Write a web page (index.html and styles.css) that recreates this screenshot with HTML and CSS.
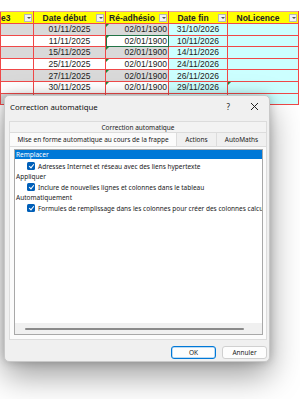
FILE: index.html
```html
<!DOCTYPE html>
<html lang="fr">
<head>
  <meta charset="UTF-8" />
  <meta name="viewport" content="width=device-width, initial-scale=1.0"/>
  <title>Correction automatique</title>
  <link rel="stylesheet" href="styles.css">
</head>
<body>
  <div class="sheet">
    <table class="grid">
      <colgroup>
        <col class="c1"><col class="c2"><col class="c3"><col class="c4"><col class="c5">
      </colgroup>
      <tr class="head">
        <th><div class="hcell"><span class="htext left">e3</span><span class="drop"></span></div></th>
        <th><div class="hcell"><span class="htext">Date début</span><span class="drop"></span></div></th>
        <th><div class="hcell"><span class="htext">Ré-adhésio</span><span class="drop"></span></div></th>
        <th><div class="hcell"><span class="htext">Date fin</span><span class="drop"></span></div></th>
        <th><div class="hcell"><span class="htext">NoLicence</span><span class="drop"></span></div></th>
      </tr>
      <tr class="odd">
        <td></td><td>01/11/2025</td><td class="num flag">02/01/1900</td><td class="cyan">31/10/2026</td><td class="cyan"></td>
      </tr>
      <tr>
        <td></td><td>11/11/2025</td><td class="num flag selected">02/01/1900</td><td class="cyan">10/11/2026</td><td class="cyan"></td>
      </tr>
      <tr class="odd">
        <td></td><td>15/11/2025</td><td class="num flag">02/01/1900</td><td class="cyan">14/11/2026</td><td class="cyan"></td>
      </tr>
      <tr>
        <td></td><td>25/11/2025</td><td class="num flag">02/01/1900</td><td class="cyan">24/11/2026</td><td class="cyan"></td>
      </tr>
      <tr class="odd">
        <td></td><td>27/11/2025</td><td class="num flag">02/01/1900</td><td class="cyan">26/11/2026</td><td class="cyan"></td>
      </tr>
      <tr>
        <td></td><td>30/11/2025</td><td class="num flag">02/01/1900</td><td class="cyan">29/11/2026</td><td class="cyan flag"></td>
      </tr>
      <tr class="odd">
        <td></td><td></td><td class="num"></td><td class="cyan"></td><td class="cyan"></td>
      </tr>
    </table>
  </div>

  <!-- boîte de dialogue par-dessus la feuille -->
  <div class="dialog">
    <div class="titlebar">
      <span class="title">Correction automatique</span>
      <span class="help">?</span>
      <svg class="close" width="9" height="9" viewBox="0 0 9 9">
        <path d="M1 1 L8 8 M8 1 L1 8" stroke="#222" stroke-width="1" fill="none"/>
      </svg>
    </div>

    <div class="tabs">
      <div class="tabrow top">
        <div class="tab wide">Correction automatique</div>
      </div>
      <div class="tabrow">
        <div class="tab active">Mise en forme automatique au cours de la frappe</div>
        <div class="tab">Actions</div>
        <div class="tab">AutoMaths</div>
      </div>
      <div class="panel">
        <div class="list">
          <div class="items">
            <div class="group sel">Remplacer</div>
            <div class="item"><span class="check"></span>Adresses Internet et réseau avec des liens hypertexte</div>
            <div class="group">Appliquer</div>
            <div class="item"><span class="check"></span>Inclure de nouvelles lignes et colonnes dans le tableau</div>
            <div class="group">Automatiquement</div>
            <div class="item"><span class="check"></span>Formules de remplissage dans les colonnes pour créer des colonnes calculé</div>
          </div>
          <div class="hscroll"><span class="thumb"></span></div>
        </div>
      </div>
    </div>

    <div class="buttons">
      <button class="btn default">OK</button>
      <button class="btn">Annuler</button>
    </div>
  </div>
</body>
</html>
```

FILE: styles.css
```css
body {
  margin: 0;
  width: 300px;
  height: 399px;
  overflow: hidden;
  background: #fff;
  font-family: "Liberation Sans", Arial, sans-serif;
  position: relative;
}

.sheet {
  padding-top: 11px;
}

.grid {
  border-collapse: collapse;
  table-layout: fixed;
  width: 298px;
  font-size: 8.5px;
  color: #222;
}

.c1 { width: 33px; }
.c2 { width: 72px; }
.c3 { width: 63px; }
.c4 { width: 59px; }
.c5 { width: 71px; }

.grid th,
.grid td {
  border: 1px solid #f04848;
  padding: 0;
  height: 10.6px;
  line-height: 10px;
  text-align: center;
  white-space: nowrap;
  overflow: hidden;
}

.grid th {
  background: #ffff00;
  height: 11px;
  font-weight: bold;
  border-top-color: #e0a0a0;
}

.hcell {
  display: flex;
  align-items: center;
}

.htext {
  flex: 1;
  overflow: hidden;
  text-align: center;
}

.htext.left {
  text-align: left;
}

.drop {
  width: 8px;
  height: 8px;
  margin: 0 1px;
  flex: none;
  background: #f2f2f2;
  border: 1px solid #b8b8b8;
  box-sizing: border-box;
  position: relative;
}

.drop::after {
  content: "";
  position: absolute;
  left: 1.5px;
  top: 2.5px;
  border-left: 2px solid transparent;
  border-right: 2px solid transparent;
  border-top: 2px solid #555;
}

.grid tr.odd td {
  background: #d9d9d9;
}

.grid td.num {
  text-align: right;
  padding-right: 1px;
  position: relative;
}

.grid td.cyan,
.grid tr.odd td.cyan {
  background: #ccffff;
}

.flag {
  position: relative;
}

.flag::before {
  content: "";
  position: absolute;
  left: 0;
  top: 0;
  border-top: 3px solid #1a8a3a;
  border-right: 3px solid transparent;
}

.grid td.selected {
  background: #fff;
  outline: 1.5px solid #217346;
  outline-offset: -1px;
}

/* dialog */

.dialog {
  position: absolute;
  left: 4px;
  top: 95px;
  width: 266px;
  height: 267px;
  box-sizing: border-box;
  background: #f0f0f0;
  border: 1px solid #c8c8c8;
  border-radius: 5px;
  box-shadow: 0 14px 32px rgba(0, 0, 0, 0.38), 0 0 10px rgba(0, 0, 0, 0.22);
  font-family: "Noto Sans", "Open Sans", sans-serif;
  font-size: 6.5px;
  color: #1a1a1a;
  display: flex;
  flex-direction: column;
  padding: 0 2px 0 4px;
}

.titlebar {
  height: 19px;
  display: flex;
  align-items: center;
  padding-left: 1px;
  padding-top: 1px;
}

.title {
  flex: 1;
  font-size: 7.8px;
  color: #111;
}

.help {
  font-size: 8px;
  margin-right: 20px;
  color: #222;
}

.close {
  margin-right: 8px;
}

.tabs {
  margin-top: 5px;
  display: flex;
  flex-direction: column;
}

.tabrow {
  display: flex;
  height: 14px;
}

.tabrow.top {
  height: 11px;
}

.tab {
  display: flex;
  align-items: center;
  justify-content: center;
  padding: 0 5px;
  border: 1px solid #dcdcdc;
  border-bottom: none;
  background: #f0f0f0;
  box-sizing: border-box;
  margin-left: -1px;
  white-space: nowrap;
}

.tab.wide {
  flex: 1;
  margin-left: 0;
  background: #f3f3f3;
}

.tab.active {
  width: 168px;
  margin-left: 0;
  background: #fbfbfb;
  padding: 0;
}

.tabrow .tab:nth-child(2) {
  width: 41px;
}

.tabrow .tab:nth-child(3) {
  width: 51px;
}

.panel {
  height: 194px;
  background: #fbfbfb;
  border: 1px solid #dcdcdc;
  box-sizing: border-box;
  padding: 2px 3px 4px 4px;
  display: flex;
}

.list {
  flex: 1;
  background: #fff;
  border: 1px solid #a8a8a8;
  display: flex;
  flex-direction: column;
  overflow: hidden;
}

.items {
  flex: 1;
  overflow: hidden;
  white-space: nowrap;
}

.group {
  height: 10.5px;
  line-height: 10.5px;
  padding-left: 1px;
}

.group.sel {
  height: 9px;
  line-height: 9px;
  background: #0078d7;
  color: #fff;
  margin-bottom: 2px;
}

.item {
  height: 10.5px;
  display: flex;
  align-items: center;
  padding-left: 12px;
}

.check {
  width: 8px;
  height: 8px;
  flex: none;
  margin-right: 3px;
  background: #005fb8;
  border-radius: 1.5px;
  position: relative;
}

.check::after {
  content: "";
  position: absolute;
  left: 2.6px;
  top: 1px;
  width: 2px;
  height: 4px;
  border-right: 1px solid #fff;
  border-bottom: 1px solid #fff;
  transform: rotate(40deg);
}

.hscroll {
  height: 11px;
  background: #f0f0f0;
  display: flex;
  align-items: center;
  padding-left: 10px;
}

.thumb {
  width: 219px;
  height: 2px;
  background: #8a8a8a;
  border-radius: 1px;
}

.buttons {
  display: flex;
  justify-content: flex-end;
  gap: 6px;
  margin-top: 6px;
}

.btn {
  width: 45px;
  height: 13px;
  padding: 0;
  font-family: "Noto Sans", "Open Sans", sans-serif;
  font-size: 6.5px;
  color: #1a1a1a;
  background: #fdfdfd;
  border: 1px solid #d0d0d0;
  border-radius: 3px;
}

.btn.default {
  border-color: #0078d7;
  box-shadow: inset 0 0 0 0.5px #7ab8ea;
}
```
